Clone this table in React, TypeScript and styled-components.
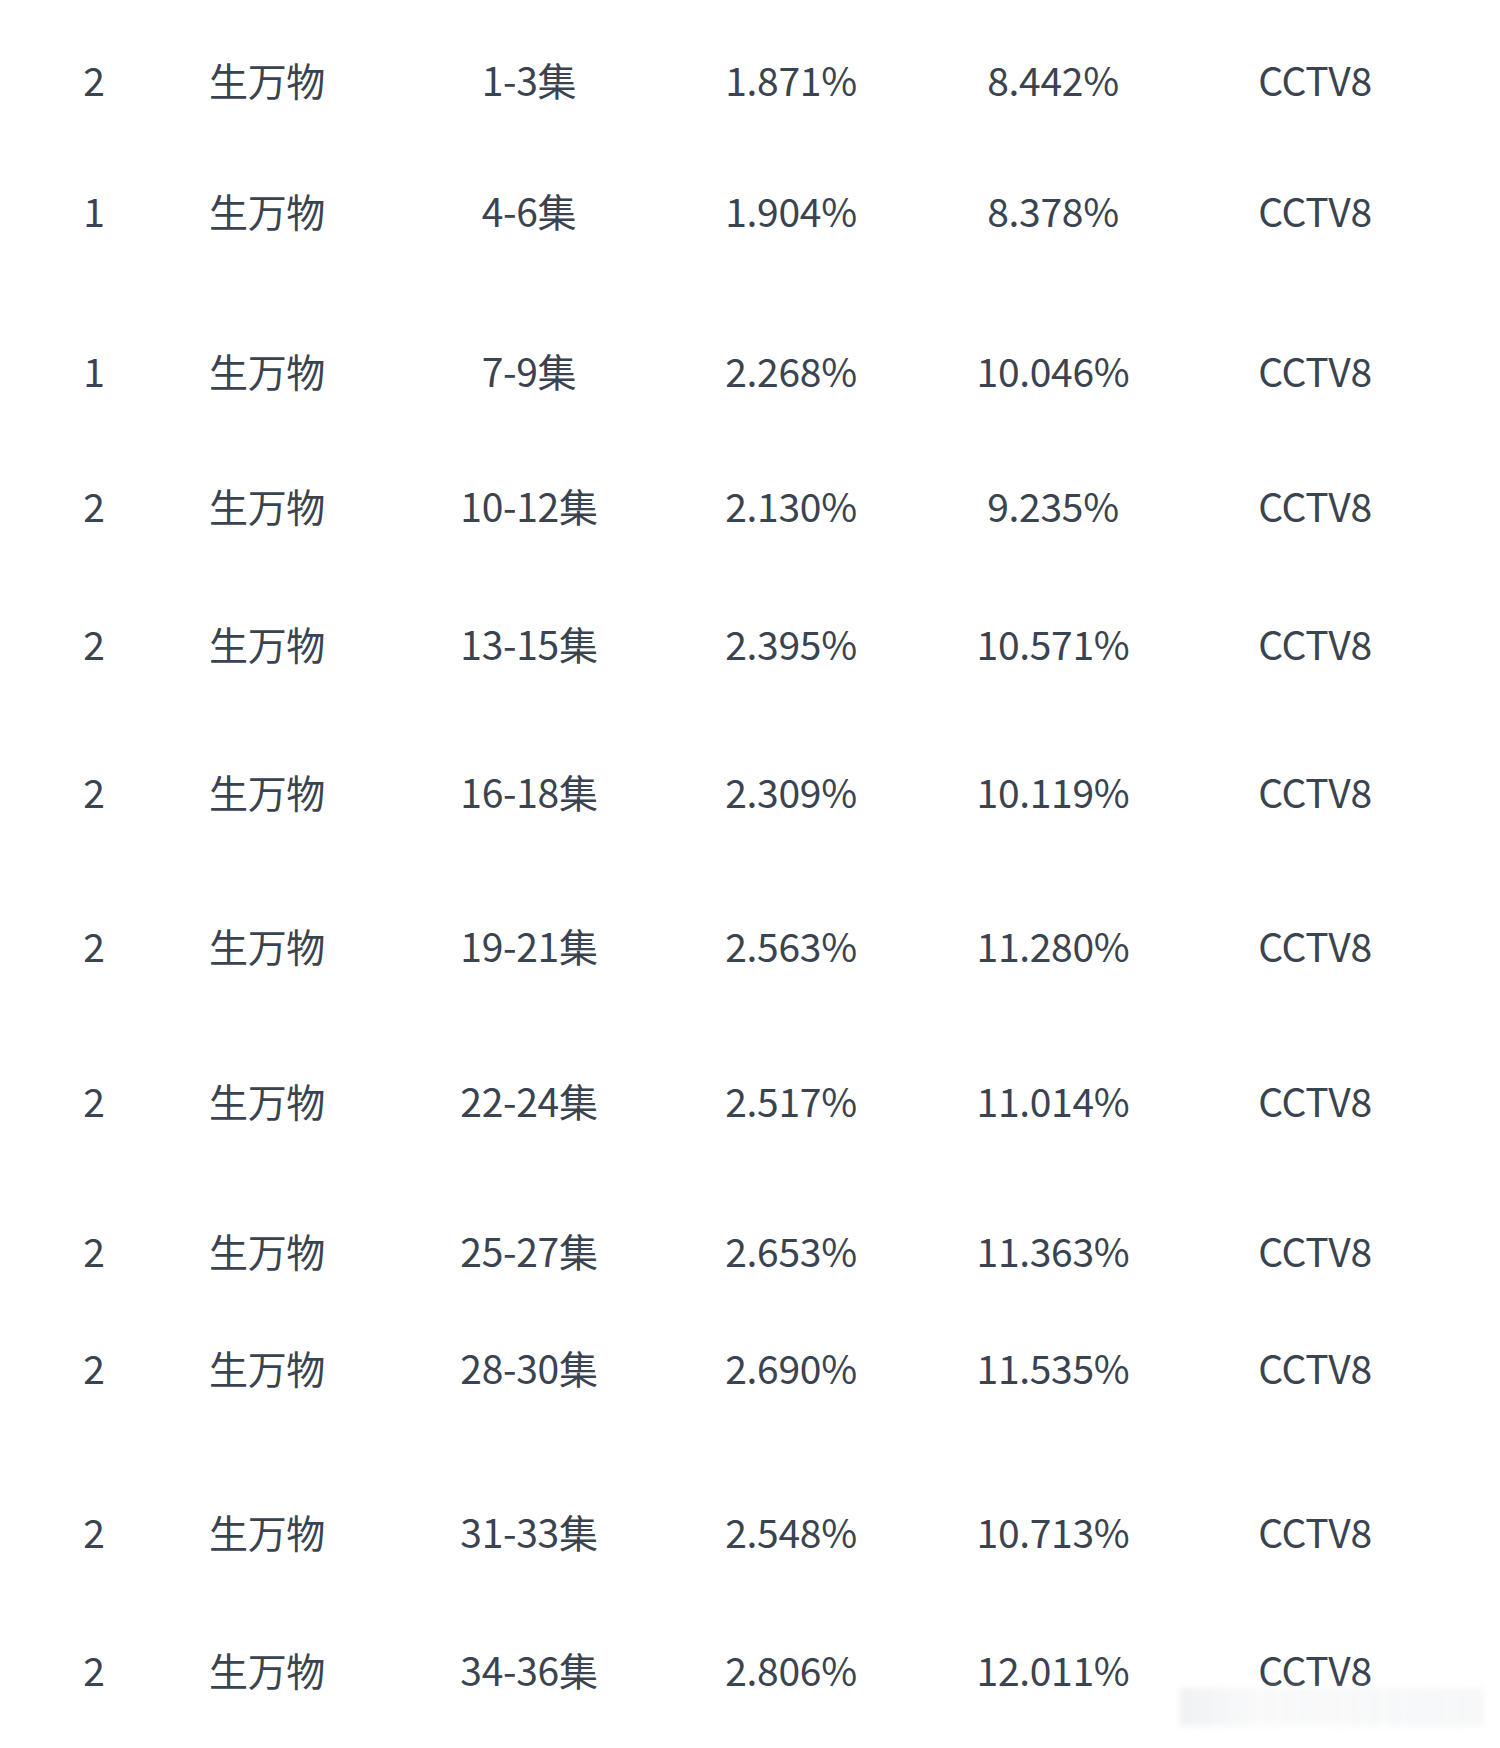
import styled, { createGlobalStyle } from "styled-components";

const GlobalStyle = createGlobalStyle`
  html, body {
    margin: 0;
    padding: 0;
    background: #ffffff;
  }
  body {
    font-family: "Noto Sans CJK SC", "Noto Sans", sans-serif;
  }
`;

const Page = styled.div`
  position: relative;
  width: 1500px;
  height: 1748px;
  background: #ffffff;
  padding-top: 54px;
  box-sizing: border-box;
  overflow: hidden;
`;

const Row = styled.div<{ $gap: number }>`
  display: grid;
  grid-template-columns: 84px repeat(5, 262px);
  padding-left: 52px;
  margin-top: ${(p) => p.$gap}px;
  height: 50px;
  align-items: center;
`;

const Cell = styled.div`
  text-align: center;
  font-size: 39px;
  line-height: 50px;
  color: #3a4450;
  letter-spacing: -0.3px;
  white-space: nowrap;
`;

const Watermark = styled.div`
  position: absolute;
  left: 1180px;
  top: 1688px;
  width: 304px;
  height: 38px;
  background: linear-gradient(
    90deg,
    rgba(228, 230, 234, 0.55),
    rgba(242, 243, 245, 0.45) 25%,
    rgba(238, 240, 242, 0.5) 100%
  );
  filter: blur(3px);
`;

type Rating = {
  rank: string;
  ep: string;
  rate: string;
  share: string;
  gap: number;
};

const rows: Rating[] = [
  { rank: "2", ep: "1-3集", rate: "1.871%", share: "8.442%", gap: 0 },
  { rank: "1", ep: "4-6集", rate: "1.904%", share: "8.378%", gap: 81 },
  { rank: "1", ep: "7-9集", rate: "2.268%", share: "10.046%", gap: 110 },
  { rank: "2", ep: "10-12集", rate: "2.130%", share: "9.235%", gap: 85 },
  { rank: "2", ep: "13-15集", rate: "2.395%", share: "10.571%", gap: 88 },
  { rank: "2", ep: "16-18集", rate: "2.309%", share: "10.119%", gap: 98 },
  { rank: "2", ep: "19-21集", rate: "2.563%", share: "11.280%", gap: 104 },
  { rank: "2", ep: "22-24集", rate: "2.517%", share: "11.014%", gap: 105 },
  { rank: "2", ep: "25-27集", rate: "2.653%", share: "11.363%", gap: 100 },
  { rank: "2", ep: "28-30集", rate: "2.690%", share: "11.535%", gap: 67 },
  { rank: "2", ep: "31-33集", rate: "2.548%", share: "10.713%", gap: 114 },
  { rank: "2", ep: "34-36集", rate: "2.806%", share: "12.011%", gap: 88 },
];

export default function App() {
  return (
    <>
      <GlobalStyle />
      <Page>
        {rows.map((r, i) => (
          <Row key={i} $gap={r.gap}>
            <Cell>{r.rank}</Cell>
            <Cell>生万物</Cell>
            <Cell>{r.ep}</Cell>
            <Cell>{r.rate}</Cell>
            <Cell>{r.share}</Cell>
            <Cell>CCTV8</Cell>
          </Row>
        ))}
        <Watermark />
      </Page>
    </>
  );
}
